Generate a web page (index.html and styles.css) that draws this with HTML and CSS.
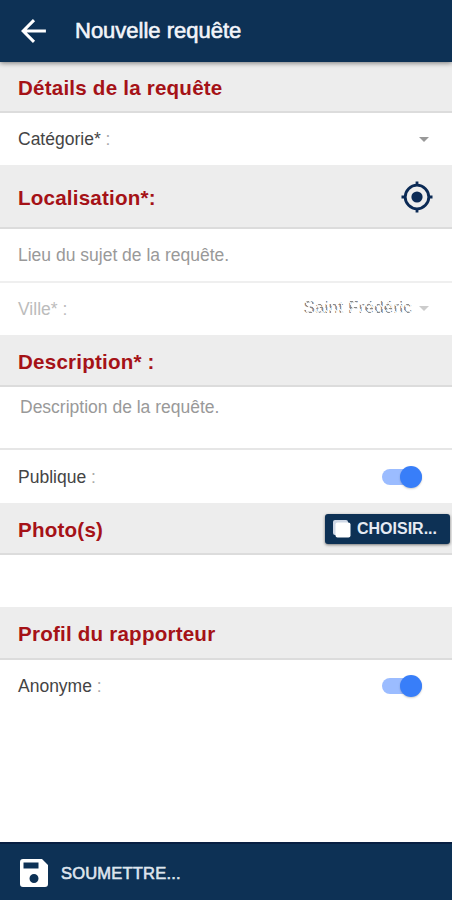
FILE: index.html
```html
<!DOCTYPE html>
<html lang="fr">
<head>
    <meta charset="UTF-8">
    <meta name="viewport" content="width=device-width, initial-scale=1.0">
    <title>Nouvelle requête</title>
    <link rel="stylesheet" href="styles.css">
</head>
<body>
    <header class="toolbar">
        <svg class="back" viewBox="0 0 24 24" width="26" height="26">
            <path d="M23 12H2M12 2L2 12l10 10" fill="none" stroke="#fff" stroke-width="2.8"/>
        </svg>
        <h1>Nouvelle requête</h1>
    </header>

    <main>
        <h2 class="section first">Détails de la requête</h2>
        <div class="row category">
            <span>Catégorie* <span class="colon">:</span></span>
            <span class="arrow"></span>
        </div>

        <h2 class="section location">
            Localisation*:
            <svg class="locate" viewBox="0 0 32 32" width="32" height="32">
                <circle cx="16" cy="16" r="11.8" fill="none" stroke="#0b2a55" stroke-width="2.8"/>
                <circle cx="16" cy="16" r="5.6" fill="#0b2a55"/>
                <path d="M16 .5v4M16 27.5v4M.5 16h4M27.5 16h4" stroke="#0b2a55" stroke-width="2.8"/>
            </svg>
        </h2>
        <div class="row place">Lieu du sujet de la requête.</div>
        <div class="row city">
            <span>Ville* :</span>
            <span class="city-value">Saint Frédéric</span>
            <span class="arrow light"></span>
        </div>

        <h2 class="section description">Description* :</h2>
        <div class="row textarea">Description de la requête.</div>
        <div class="row public">
            <span>Publique <span class="colon">:</span></span>
            <span class="toggle"></span>
        </div>

        <h2 class="section photos">
            Photo(s)
            <button class="button">
                <svg viewBox="0 0 18 18" width="18" height="18">
                    <rect x="0" y="0" width="15" height="15" rx="2" fill="#cfd8e6"/>
                    <rect x="2.5" y="2.5" width="15" height="15" rx="2" fill="#fff"/>
                </svg>
                CHOISIR...
            </button>
        </h2>
        <div class="photo-list"></div>

        <h2 class="section profile">Profil du rapporteur</h2>
        <div class="row anonymous">
            <span>Anonyme <span class="colon">:</span></span>
            <span class="toggle"></span>
        </div>
    </main>

    <footer class="submit">
        <svg viewBox="0 0 28 28" width="28" height="28">
            <path fill="#fff" fill-rule="evenodd" d="M3 0h19l6 6v19a3 3 0 0 1-3 3H3a3 3 0 0 1-3-3V3a3 3 0 0 1 3-3zM3.500 3.500v6h15v-6zM14 15a4.500 4.500 0 1 0 0 9 4.500 4.500 0 0 0 0-9z"/>
        </svg>
        <span>SOUMETTRE...</span>
    </footer>
</body>
</html>
```

FILE: styles.css
```css
* {
    box-sizing: border-box;
}

body {
    display: flex;
    flex-direction: column;
    height: 900px;
    margin: 0;
    background-color: #fff;
    color: #444;
    font-family: "Liberation Sans", Arial, sans-serif;
    font-size: 17.5px;
    overflow: hidden;
}

main {
    flex: 1;
}

.toolbar {
    position: relative;
    display: flex;
    align-items: center;
    height: 62px;
    padding-left: 21px;
    background-color: #0d3155;
    box-shadow: 0 1px 5px rgba(0, 0, 0, 0.5);
}

.toolbar h1 {
    margin: 0 0 0 28px;
    color: #f2f5fa;
    font-size: 22px;
    font-weight: normal;
    -webkit-text-stroke: 0.6px #f2f5fa;
}

.section {
    display: flex;
    align-items: center;
    justify-content: space-between;
    height: 52px;
    margin: 0;
    padding-top: 3px;
    padding-left: 18px;
    background-color: #ededed;
    border-bottom: 2px solid #dcdcdc;
    color: #a51217;
    font-size: 20.6px;
    font-weight: bold;
    letter-spacing: 0.2px;
}

.section.first {
    height: 51px;
    padding-top: 2px;
}

.section.location {
    height: 64px;
    padding-right: 19px;
}

.locate {
    margin-bottom: 2px;
}

.section.photos {
    padding-right: 2px;
}

.section.profile {
    height: 53px;
}

.row {
    display: flex;
    align-items: center;
    height: 53px;
    padding: 0 30px 0 18px;
}

.row.category {
    height: 52px;
    padding-right: 23px;
    justify-content: space-between;
}

.colon {
    color: #aaa;
}

.row.place {
    height: 54px;
    border-bottom: 2px solid #efefef;
    color: #999;
}

.row.city {
    height: 52px;
    padding-right: 23px;
    color: #bcbcbc;
}

.city-value {
    position: relative;
    margin: -3px 7px 0 auto;
    color: #888;
    font-size: 17px;
    letter-spacing: 0.2px;
}

/* hatching that keeps the city unreadable */
.city-value::after {
    content: "";
    position: absolute;
    inset: 0;
    background: repeating-linear-gradient(55deg, transparent 0 2.500px, rgba(255, 255, 255, 0.85) 2.500px 4px);
}

.row.textarea {
    align-items: flex-start;
    height: 63px;
    padding: 10px 20px;
    border-bottom: 2px solid #e6e6e6;
    color: #999;
}

.row.public,
.row.anonymous {
    justify-content: space-between;
}

.row.public {
    padding-top: 1px;
}

.row.anonymous {
    height: 52px;
}

.arrow {
    border: 5px solid transparent;
    border-top-color: #999;
    border-bottom: 0;
}

.arrow.light {
    margin-top: -2px;
    border-top-color: #ccc;
}

.toggle {
    position: relative;
    width: 40px;
    height: 16px;
    border-radius: 8px;
    background-color: #9bbcff;
}

.toggle::after {
    content: "";
    position: absolute;
    top: -3px;
    right: 0;
    width: 22px;
    height: 22px;
    border-radius: 50%;
    background-color: #387ef9;
    box-shadow: 0 1px 2px rgba(0, 0, 0, 0.2);
}

.button {
    display: flex;
    align-items: center;
    gap: 6px;
    width: 125px;
    height: 30px;
    margin: 0 0 2px;
    padding: 0 0 0 8px;
    border: 0;
    border-radius: 3px;
    background-color: #0d3155;
    box-shadow: 0 1px 3px rgba(0, 0, 0, 0.5);
    color: #e6ebf3;
    font-family: inherit;
    font-size: 16px;
    font-weight: bold;
}

.photo-list {
    height: 52px;
}

.submit {
    display: flex;
    align-items: center;
    gap: 13px;
    height: 58px;
    padding: 3px 0 0 20px;
    border-top: 2px solid #081f42;
    background-color: #0d3155;
    color: #dfe5ee;
    font-size: 16.5px;
    letter-spacing: 0.2px;
    -webkit-text-stroke: 0.6px #dfe5ee;
}

.submit svg {
    margin-bottom: 2px;
}
```
